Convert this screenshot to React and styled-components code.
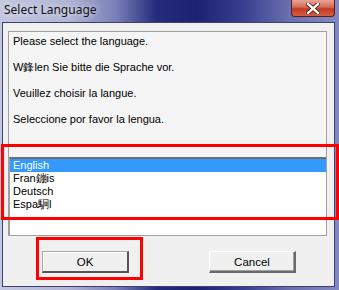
import styled, { createGlobalStyle } from 'styled-components';

const Global = createGlobalStyle`
  html, body {
    margin: 0;
    padding: 0;
    background: #ffffff;
  }
`;

const Window = styled.div`
  position: relative;
  width: 339px;
  height: 290px;
  box-sizing: border-box;
  display: flex;
  flex-direction: column;
  padding: 0 4px 3px 2px;
  background: linear-gradient(90deg, #c3c7df 0%, #b0b5d6 20%, #7a80b8 34%, #262c7c 46%, #1c2170 58%, #3a4090 72%, #6c72b0 86%, #8489c0 100%);
  font-family: "Liberation Sans", Arial, sans-serif;
  font-size: 11px;
  color: #000;
  overflow: hidden;
`;

const TitleBar = styled.div`
  height: 22px;
  display: flex;
  align-items: flex-start;
  flex-shrink: 0;
`;

const Title = styled.div`
  font-family: "Noto Sans", "Open Sans", sans-serif;
  font-size: 12px;
  line-height: 20px;
  padding-left: 2px;
  color: #111;
  text-shadow: 0 0 6px rgba(255, 255, 255, 0.9);
`;

const CloseButton = styled.div`
  margin-left: auto;
  width: 44px;
  height: 17px;
  box-sizing: border-box;
  border: 1px solid #5a1d1d;
  border-top: none;
  border-radius: 0 0 4px 4px;
  background: linear-gradient(180deg, #e8a495 0%, #d46a58 45%, #c03a24 55%, #d4603e 100%);
  display: flex;
  align-items: center;
  justify-content: center;
`;

const Client = styled.div`
  flex: 1;
  background: #f0f0f0;
  border: 1px solid #3c416f;
  display: flex;
  flex-direction: column;
  padding: 8px 7px 0 5px;
`;

const Panel = styled.div`
  border: 1px solid #a0a0a0;
  background: #f5f5f5;
  display: flex;
  flex-direction: column;
`;

const Prompts = styled.div`
  display: flex;
  flex-direction: column;
  gap: 13px;
  padding: 3px 0 0 4px;
`;

const Prompt = styled.div`
  line-height: 13px;
  height: 13px;
  white-space: nowrap;
`;

const ListBox = styled.div`
  margin-top: 31px;
  height: 76px;
  background: #ffffff;
  border-top: 2px solid #6d6d6d;
  border-left: 1px solid #a0a0a0;
  display: flex;
  flex-direction: column;
`;

const ListItem = styled.div`
  height: 13px;
  line-height: 13px;
  padding-left: 3px;
  white-space: nowrap;
  background: ${(p) => (p.$selected ? '#3399ff' : 'transparent')};
  color: ${(p) => (p.$selected ? '#ffffff' : '#000000')};
`;

const ButtonRow = styled.div`
  display: flex;
  padding: 15px 0 0 34px;
  gap: 80px;
`;

const Button = styled.div`
  width: 87px;
  height: 22px;
  box-sizing: border-box;
  background: #f0f0f0;
  border-top: 1px solid ${(p) => (p.$default ? '#a8a8a8' : '#ffffff')};
  border-left: 1px solid ${(p) => (p.$default ? '#a8a8a8' : '#ffffff')};
  border-right: 2px solid ${(p) => (p.$default ? '#555555' : '#6a6a6a')};
  border-bottom: 2px solid ${(p) => (p.$default ? '#555555' : '#6a6a6a')};
  box-shadow: ${(p) => (p.$default ? 'inset 1px 1px 0 #ffffff' : 'inset -1px -1px 0 #a0a0a0')};
  display: flex;
  align-items: center;
  justify-content: center;
  font-size: 11.5px;
`;

const Highlight = styled.div`
  position: absolute;
  box-sizing: border-box;
  border: 3px solid #ff0000;
  left: ${(p) => p.$x}px;
  top: ${(p) => p.$y}px;
  width: ${(p) => p.$w}px;
  height: ${(p) => p.$h}px;
  pointer-events: none;
`;

const languages = ['English', 'Fran鏰is', 'Deutsch', 'Espa駉l'];

export default function App() {
  return (
    <>
      <Global />
      <Window>
        <TitleBar>
          <Title>Select Language</Title>
          <CloseButton>
            <svg width="14" height="11" viewBox="0 0 14 11">
              <path d="M2 1 L12 10 M12 1 L2 10" stroke="#4a1010" strokeWidth="4" strokeLinecap="square" />
              <path d="M2 1 L12 10 M12 1 L2 10" stroke="#ffffff" strokeWidth="2.4" strokeLinecap="square" />
            </svg>
          </CloseButton>
        </TitleBar>
        <Client>
          <Panel>
            <Prompts>
              <Prompt>Please select the language.</Prompt>
              <Prompt>W鋒len Sie bitte die Sprache vor.</Prompt>
              <Prompt>Veuillez choisir la langue.</Prompt>
              <Prompt>Seleccione por favor la lengua.</Prompt>
            </Prompts>
            <ListBox>
              {languages.map((l, i) => (
                <ListItem key={l} $selected={i === 0}>{l}</ListItem>
              ))}
            </ListBox>
          </Panel>
          <ButtonRow>
            <Button $default>OK</Button>
            <Button>Cancel</Button>
          </ButtonRow>
        </Client>
        <Highlight $x={1} $y={144} $w={338} $h={76} />
        <Highlight $x={36} $y={237} $w={107} $h={43} />
      </Window>
    </>
  );
}
